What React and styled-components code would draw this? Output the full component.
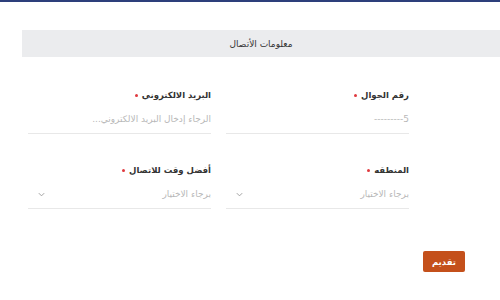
import React from 'react';
import styled, { createGlobalStyle } from 'styled-components';

const Global = createGlobalStyle`
  html, body {
    margin: 0;
    padding: 0;
    background: #fff;
    font-family: "DejaVu Sans", "Noto Sans", sans-serif;
  }
`;

const TopLine = styled.div`
  height: 2px;
  background-color: #2d3f7b;
`;

const Card = styled.div`
  padding: 28px 0 0 22px;
`;

const SectionTitle = styled.div`
  height: 27px;
  background-color: #ebecee;
  display: flex;
  align-items: center;
  justify-content: center;
  font-size: 9px;
  color: #333;
  direction: rtl;
`;

const Grid = styled.div`
  direction: rtl;
  display: grid;
  grid-template-columns: 183px 183px;
  column-gap: 15px;
  row-gap: 30px;
  padding: 32px 91px 0 0;
  justify-content: start;
`;

const Field = styled.div`
  display: flex;
  flex-direction: column;
`;

const Label = styled.label`
  font-size: 8.5px;
  font-weight: bold;
  color: #333;
  display: flex;
  align-items: center;
  gap: 4px;
  height: 12px;
`;

const Required = styled.span`
  width: 3px;
  height: 3px;
  border-radius: 50%;
  background-color: #e0393e;
`;

const Control = styled.div`
  height: 24px;
  margin-top: 6px;
  border-bottom: 1px solid #e8e8e8;
  display: flex;
  align-items: center;
  justify-content: space-between;
  font-size: 9px;
  color: #b8b8b8;
  padding: 0 0 2px 9px;
`;

const Chevron = styled.svg`
  width: 9px;
  height: 9px;
`;

const Footer = styled.div`
  display: flex;
  justify-content: flex-end;
  padding: 42px 35px 0 0;
`;

const SubmitButton = styled.button`
  width: 42px;
  height: 21px;
  border: none;
  border-radius: 2px;
  background-color: #c4501b;
  color: #fff;
  font-family: inherit;
  font-size: 8.5px;
  font-weight: bold;
  direction: rtl;
  padding: 0;
`;

const Select = ({ placeholder }) => (
  <Control>
    <span>{placeholder}</span>
    <Chevron viewBox="0 0 10 10">
      <path d="M2 3.5 L5 6.5 L8 3.5" fill="none" stroke="#999" strokeWidth="1" />
    </Chevron>
  </Control>
);

export default function App() {
  return (
    <>
      <Global />
      <TopLine />
      <Card>
        <SectionTitle>معلومات الأتصال</SectionTitle>
        <Grid>
          <Field>
            <Label>رقم الجوال <Required /></Label>
            <Control><span>5---------</span></Control>
          </Field>
          <Field>
            <Label>البريد الالكتروني <Required /></Label>
            <Control><span>الرجاء إدخال البريد الالكتروني...</span></Control>
          </Field>
          <Field>
            <Label>المنطقه <Required /></Label>
            <Select placeholder="برجاء الاختيار" />
          </Field>
          <Field>
            <Label>أفضل وقت للاتصال <Required /></Label>
            <Select placeholder="برجاء الاختيار" />
          </Field>
        </Grid>
        <Footer>
          <SubmitButton>تقديم</SubmitButton>
        </Footer>
      </Card>
    </>
  );
}
